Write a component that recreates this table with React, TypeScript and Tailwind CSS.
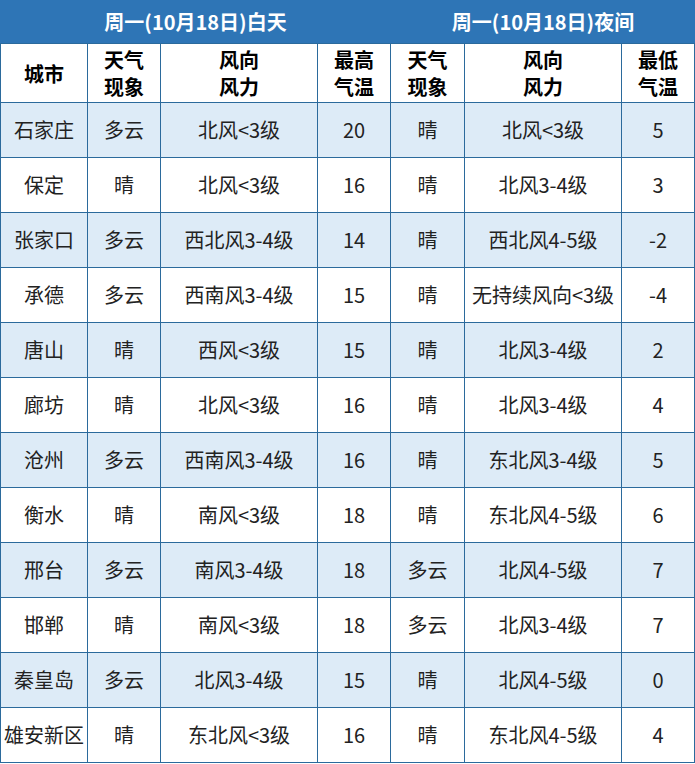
import React from "react";

const rows: string[][] = [
  ["石家庄", "多云", "北风<3级", "20", "晴", "北风<3级", "5"],
  ["保定", "晴", "北风<3级", "16", "晴", "北风3-4级", "3"],
  ["张家口", "多云", "西北风3-4级", "14", "晴", "西北风4-5级", "-2"],
  ["承德", "多云", "西南风3-4级", "15", "晴", "无持续风向<3级", "-4"],
  ["唐山", "晴", "西风<3级", "15", "晴", "北风3-4级", "2"],
  ["廊坊", "晴", "北风<3级", "16", "晴", "北风3-4级", "4"],
  ["沧州", "多云", "西南风3-4级", "16", "晴", "东北风3-4级", "5"],
  ["衡水", "晴", "南风<3级", "18", "晴", "东北风4-5级", "6"],
  ["邢台", "多云", "南风3-4级", "18", "多云", "北风4-5级", "7"],
  ["邯郸", "晴", "南风<3级", "18", "多云", "北风3-4级", "7"],
  ["秦皇岛", "多云", "北风3-4级", "15", "晴", "北风4-5级", "0"],
  ["雄安新区", "晴", "东北风<3级", "16", "晴", "东北风4-5级", "4"],
];

const heads: [string, string?][] = [
  ["城市"],
  ["天气", "现象"],
  ["风向", "风力"],
  ["最高", "气温"],
  ["天气", "现象"],
  ["风向", "风力"],
  ["最低", "气温"],
];

export default function App() {
  return (
    <div
      className="w-[695px] h-[764px] bg-white overflow-hidden"
      style={{ fontFamily: '"Microsoft YaHei", "Noto Sans CJK SC", "Noto Sans", sans-serif' }}
    >
      <div className="grid grid-cols-[88px_73px_157px_73px_74px_157px_73px] w-[695px]">
        <div className="col-span-4 h-[44px] bg-[#2e75b6] border-b border-[#2b6a9c] flex items-center justify-center text-white font-bold text-[20px]">
          周一(10月18日)白天
        </div>
        <div className="col-span-3 h-[44px] bg-[#2e75b6] border-b border-[#2b6a9c] flex items-center justify-center text-white font-bold text-[20px]">
          周一(10月18日)夜间
        </div>
        {heads.map((h, i) => (
          <div
            key={"h" + i}
            className={`h-[59px] bg-white border-r border-b border-[#2b6a9c] flex flex-col items-center justify-center text-black font-bold text-[20px] leading-[27px] ${i === 0 ? "border-l" : ""}`}
          >
            <span>{h[0]}</span>
            {h[1] && <span>{h[1]}</span>}
          </div>
        ))}
        {rows.map((r, ri) =>
          r.map((c, ci) => (
            <div
              key={ri + "-" + ci}
              className={`h-[55px] border-r border-b border-[#2b6a9c] flex items-center justify-center text-[#222] text-[20px] whitespace-nowrap ${
                ri % 2 === 0 ? "bg-[#ddebf7]" : "bg-white"
              } ${ci === 0 ? "border-l" : ""}`}
            >
              {c}
            </div>
          ))
        )}
      </div>
    </div>
  );
}
